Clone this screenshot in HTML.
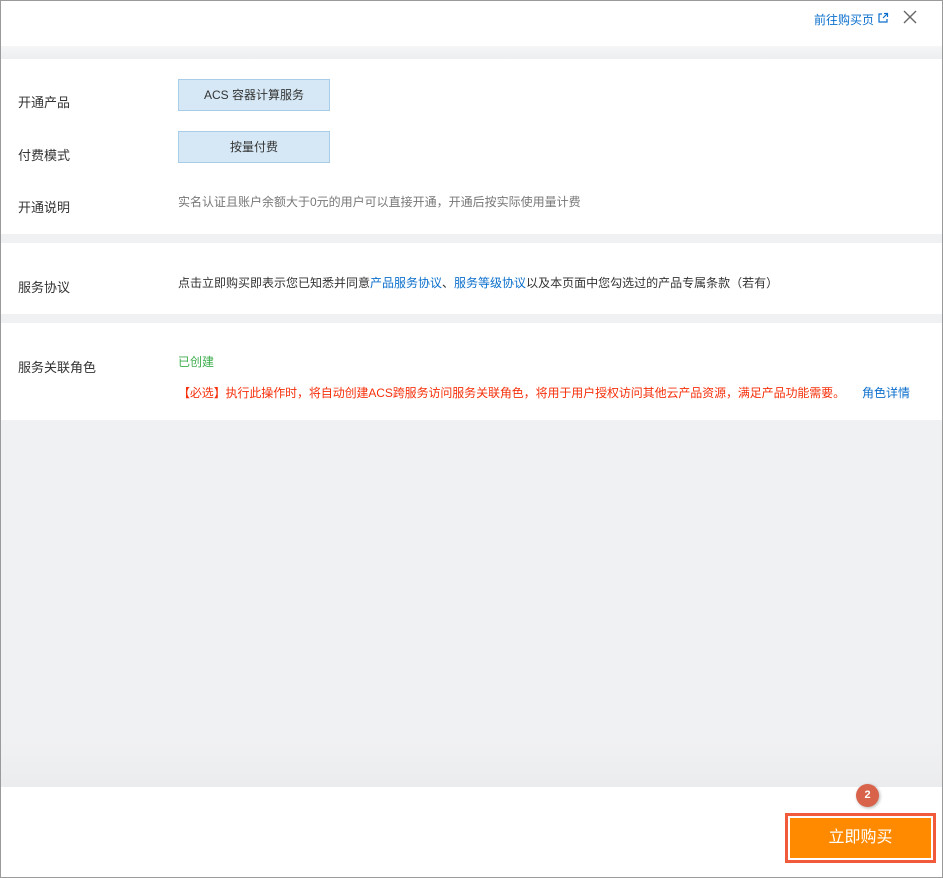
<!DOCTYPE html>
<html><head><meta charset="utf-8"><style>
*{margin:0;padding:0;box-sizing:border-box}
body{width:943px;height:878px;font-family:"Liberation Sans","Noto Sans CJK SC",sans-serif;background:#fff;position:relative;overflow:hidden}
.frame{position:absolute;left:0;top:0;width:943px;height:878px;border:1px solid #9a9a9a;background:#f0f1f3}
.abs{position:absolute}
.w{position:absolute;left:1px;width:941px;background:#fff}
.lab{position:absolute;left:18px;font-size:13px;color:#333}
.box{position:absolute;left:178px;width:152px;height:32px;background:#d6e8f5;border:1px solid #a8cde9;font-size:12px;color:#333;text-align:center;line-height:30px}
.t12{position:absolute;font-size:12px;color:#333;white-space:nowrap}
a{color:#0b6fcc;text-decoration:none}
</style></head><body>
<div class="frame"></div>
<div class="w" style="top:1px;height:45px"></div>
<div class="abs" style="left:1px;top:46px;width:941px;height:13px;background:linear-gradient(#f6f6f7,#eceef0)"></div>
<div class="t12" style="left:814px;top:11px;color:#0b6fcc">前往购买页</div>
<svg class="abs" style="left:877px;top:12px" width="12" height="12" viewBox="0 0 12 12"><path d="M5 2H2v8h8V7M7 1.5h3.5V5M10.5 1.5L6 6" fill="none" stroke="#0b6fcc" stroke-width="1.2"/></svg>
<svg class="abs" style="left:903px;top:10px" width="14" height="14" viewBox="0 0 14 14"><path d="M1 1L13 13M13 1L1 13" stroke="#666" stroke-width="1.4"/></svg>

<div class="w" style="top:59px;height:175px"></div>
<div class="lab" style="top:92px">开通产品</div>
<div class="box" style="top:79px">ACS 容器计算服务</div>
<div class="lab" style="top:145px">付费模式</div>
<div class="box" style="top:131px">按量付费</div>
<div class="lab" style="top:197px">开通说明</div>
<div class="t12" style="left:178px;top:193px;color:#777">实名认证且账户余额大于0元的用户可以直接开通，开通后按实际使用量计费</div>

<div class="w" style="top:243px;height:71px"></div>
<div class="lab" style="top:277px">服务协议</div>
<div class="t12" style="left:178px;top:274px">点击立即购买即表示您已知悉并同意<a>产品服务协议</a>、<a>服务等级协议</a>以及本页面中您勾选过的产品专属条款（若有）</div>

<div class="w" style="top:323px;height:97px"></div>
<div class="lab" style="top:357px">服务关联角色</div>
<div class="t12" style="left:178px;top:353px;color:#3dad4d">已创建</div>
<div class="t12" style="left:178px;top:384px;color:#f5300b;letter-spacing:-0.1px">【必选】执行此操作时，将自动创建ACS跨服务访问服务关联角色，将用于用户授权访问其他云产品资源，满足产品功能需要。</div>
<div class="t12" style="left:862px;top:384px;color:#0b6fcc">角色详情</div>

<div class="abs" style="left:1px;top:740px;width:941px;height:47px;background:linear-gradient(#f0f1f3,#ebecee)"></div>
<div class="w" style="top:787px;height:90px"></div>
<div class="abs" style="left:856px;top:784px;width:23px;height:23px;border-radius:50%;background:#d9634a;color:#fff;font-size:11px;font-weight:bold;text-align:center;line-height:23px;box-shadow:1px 1px 3px rgba(0,0,0,.3)">2</div>
<div class="abs" style="left:785px;top:813px;width:151px;height:50px;border:3px solid #f25a3c;background:#fff;padding:2px">
<div style="width:100%;height:100%;background:#ff8a00;color:#fff;font-size:16px;text-align:center;line-height:39px">立即购买</div></div>
</body></html>
